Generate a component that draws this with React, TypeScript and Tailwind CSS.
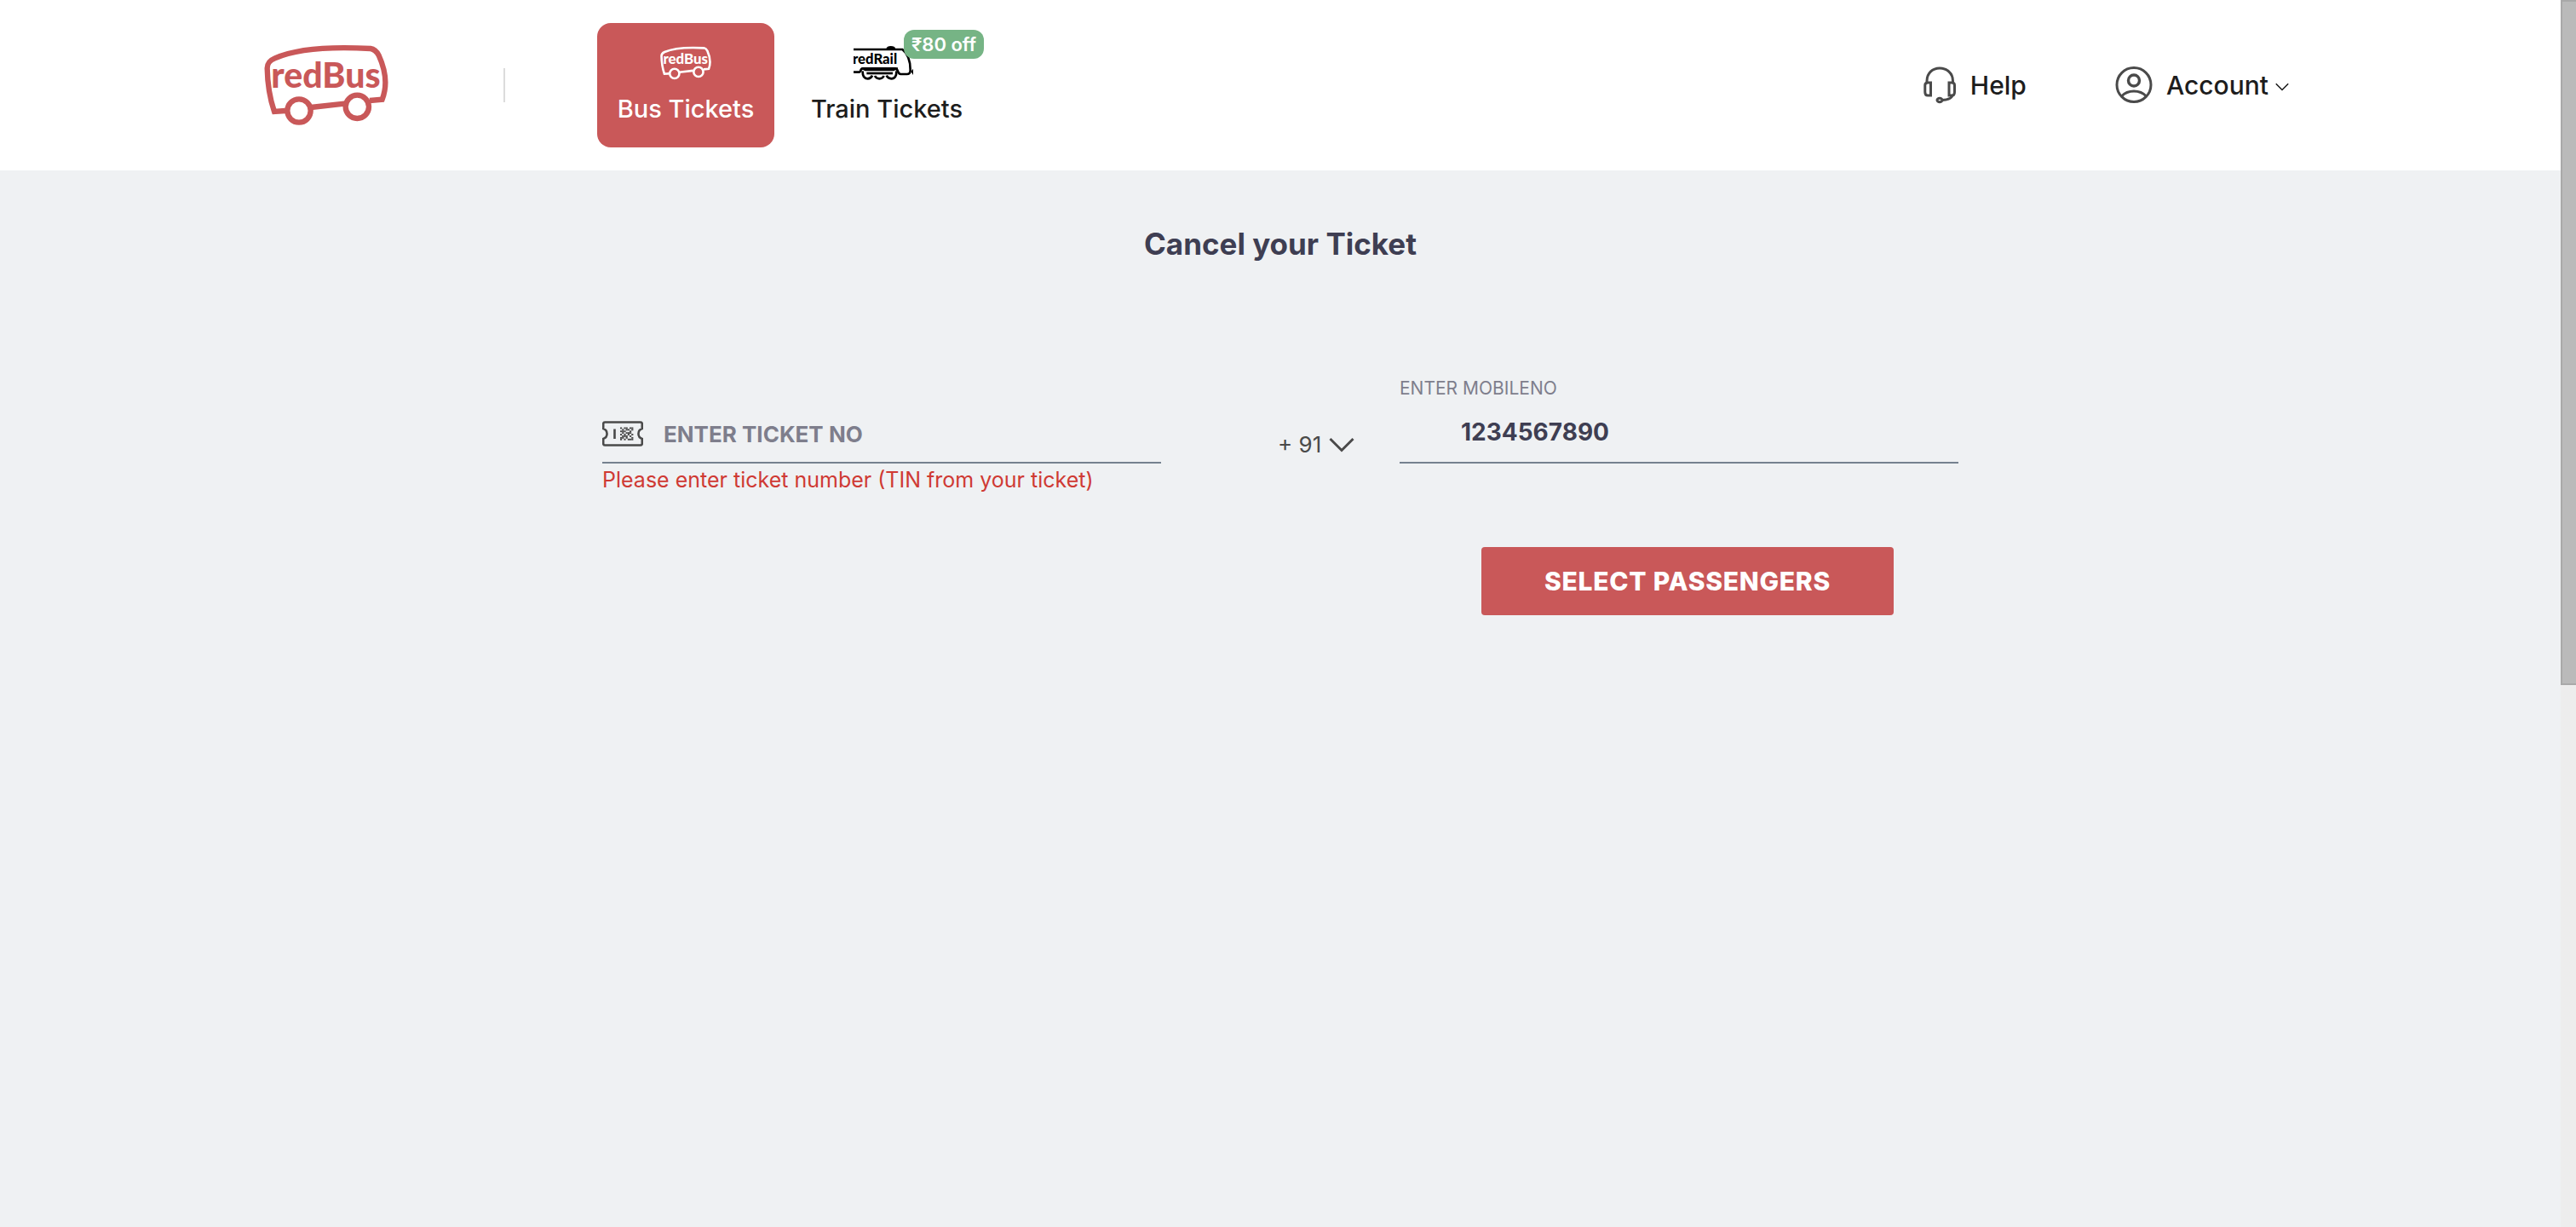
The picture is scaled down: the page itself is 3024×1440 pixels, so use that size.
import { useState } from "react";

function BusLogo({ className }: { className: string }) {
  return (
    <svg viewBox="0 0 438 288" className={className} role="img" aria-label="redBus">
      <g fill="none" stroke="currentColor" strokeWidth="19">
        <path d="M75 234 L36 237 C22 196 12 140 11 84 C11 66 19 57 38 49 C112 16 230 7 375 15 C388 17 396 24 404 39 C430 96 434 148 416 194 L372 198" />
        <path d="M165 222 L283 209" />
        <circle cx="123" cy="234" r="41" />
        <circle cx="328" cy="220" r="41" />
      </g>
      <text x="25" y="152" fontSize="123" fontWeight="900" fill="currentColor" className="font-['Lato',sans-serif]">
        redBus
      </text>
    </svg>
  );
}

function TrainLogo({ className }: { className: string }) {
  return (
    <svg viewBox="0 0 234 120" className={className} role="img" aria-label="redRail">
      <g fill="none" stroke="currentColor" strokeWidth="8">
        <path d="M0 12 H172 C192 28 200 56 200 84 C200 96 196 99 188 99 H166 C158 99 158 94 155 86 Q152 79 144 79 H34 Q27 79 25 86 Q24 92 16 92 H0" />
        <path d="M32 88 Q31 115 50 115 Q61 115 66 104" />
        <path d="M75 105 Q80 115 91 115 Q102 115 107 105" />
        <path d="M116 104 Q122 115 133 115 Q152 115 151 88" />
        <path d="M46 96 H138" />
      </g>
      <path d="M28 76 H156 V84 H148 L142 88 H40 L34 84 H28 Z" fill="currentColor" />
      <path d="M115 10 C117 2 122 0 131 0 C141 0 146 2 148 10 Z" fill="currentColor" />
      <path d="M202 90 L210 80 V102 Z" fill="currentColor" />
      <text x="-3" y="62" fontSize="50" fontWeight="900" fill="currentColor" className="font-['Lato',sans-serif]">
        redRail
      </text>
    </svg>
  );
}

function HeadsetIcon() {
  return (
    <svg viewBox="0 0 40 44" className="h-11 w-10 text-[#4a4a4a]" fill="none" stroke="currentColor" strokeWidth="3" aria-hidden="true">
      <path d="M5 19 V17 C5 8 11.500 2 20 2 C28.500 2 35.500 8 35.500 17 V19" />
      <path d="M9.500 19 H6 Q2.800 19 2.800 22 V30 Q2.800 34 6 34 H9.500 Z" />
      <path d="M31 19 H34.500 Q37.500 19 37.500 22 V30 Q37.500 34 34.500 34 H31 Z" />
      <path d="M35 34 Q33 39 23 39.500" />
      <ellipse cx="20" cy="39.500" rx="3" ry="2.200" />
    </svg>
  );
}

function AccountIcon() {
  return (
    <svg viewBox="0 0 44 44" className="size-11 text-[#4a4a4a]" fill="none" stroke="currentColor" strokeWidth="3" aria-hidden="true">
      <circle cx="22" cy="21.500" r="20" />
      <circle cx="22" cy="16.500" r="6.500" strokeWidth="3.400" />
      <path d="M7.500 35 Q13 29 22 29 Q31 29 36.500 35" />
    </svg>
  );
}

function Chevron({ className }: { className: string }) {
  return (
    <svg viewBox="0 0 30 18" className={className} fill="none" stroke="currentColor" strokeWidth="3" aria-hidden="true">
      <path d="M1.500 2 L15 15.500 L28.500 2" />
    </svg>
  );
}

const qrRows = ["1011011", "0101101", "1110010", "0101110", "1010101", "0111010", "1101001", "1010111"];

function TicketIcon() {
  return (
    <svg viewBox="0 0 48 30" className="h-[30px] w-12 shrink-0 text-[#4a4a4a]" fill="none" stroke="currentColor" strokeWidth="2.600" aria-hidden="true">
      <path d="M3 1.500 H45 Q46.800 1.500 46.800 3.500 V9 C41 11 41 19 46.800 21 V26.500 Q46.800 28.500 45 28.500 H3 Q1.200 28.500 1.200 26.500 V21 C7 19 7 11 1.200 9 V3.500 Q1.200 1.500 3 1.500 Z" />
      <path d="M14.500 9.500 V21" />
      <g fill="currentColor" stroke="none">
        {qrRows.flatMap((row, y) =>
          [...row].map((bit, x) =>
            bit === "1" ? <rect key={`${x}-${y}`} x={21 + x * 2.2} y={7.5 + y * 1.9} width="2.2" height="1.9" /> : null,
          ),
        )}
      </g>
    </svg>
  );
}

function Header() {
  return (
    <header className="flex h-[200px] items-center bg-white pr-[319px] pl-[310px] text-[#1d1d1d]">
      <a href="#home" className="text-[#c95859]">
        <BusLogo className="h-24 w-[146px]" />
      </a>
      <div className="ml-[135px] h-10 w-0.5 bg-[#dcdcdc]" />
      <nav className="ml-[108px] flex items-center text-[29px] leading-9 font-medium">
        <a href="#bus" className="flex h-[146px] w-52 flex-col items-center rounded-2xl bg-[#c95859] pt-[27px] text-white">
          <BusLogo className="h-10 w-[60px]" />
          <span className="mt-4">Bus Tickets</span>
        </a>
        <a href="#train" className="relative ml-7 flex h-[146px] w-52 flex-col items-center pt-[27px]">
          <TrainLogo className="h-10 w-[78px] text-black" />
          <span className="mt-4">Train Tickets</span>
          <span className="absolute top-2 left-[124px] flex h-[34px] w-[94px] items-center justify-center rounded-xl bg-[#76b485] text-[22px] font-semibold whitespace-nowrap text-white">
            ₹80 off
          </span>
        </a>
      </nav>
      <div className="ml-auto flex items-center text-[30px] leading-9 font-medium">
        <a href="#help" className="flex items-center gap-4">
          <HeadsetIcon />
          <span>Help</span>
        </a>
        <button type="button" className="ml-[104px] flex items-center">
          <AccountIcon />
          <span className="ml-4">Account</span>
          <Chevron className="mt-1 ml-2 h-[10px] w-4" />
        </button>
      </div>
    </header>
  );
}

function CancelForm() {
  const [ticket, setTicket] = useState("");
  const [mobile, setMobile] = useState("1234567890");
  return (
    <form className="mx-auto mt-[124px] w-[1592px]" onSubmit={(event) => event.preventDefault()}>
      <div className="flex items-start">
        <div className="w-[656px] pt-11">
          <div className="flex h-[68px] items-center border-b-2 border-[#75818f]">
            <TicketIcon />
            <input
              id="ticket"
              aria-label="Enter ticket no"
              aria-describedby="ticket-error"
              placeholder="ENTER TICKET NO"
              value={ticket}
              onChange={(event) => setTicket(event.target.value)}
              className="ml-6 h-9 min-w-0 flex-1 bg-transparent text-[26px] font-bold text-[#3e3e52] outline-none placeholder:text-[#7e7e8c]"
            />
          </div>
          <p id="ticket-error" className="text-[25px] leading-[38px] text-[#cf3a34]">
            Please enter ticket number (TIN from your ticket)
          </p>
        </div>
        <div className="mt-[72px] ml-auto flex items-center text-[#4a4a4a]">
          <select aria-label="Country code" className="w-[60px] appearance-none bg-transparent text-[26px] leading-9 outline-none">
            <option>+ 91</option>
          </select>
          <Chevron className="h-[18px] w-[30px]" />
        </div>
        <div className="ml-[53px] w-[656px]">
          <label htmlFor="mobile" className="block h-10 pt-2 text-[21px] leading-8 text-[#7e7e8c]">
            ENTER MOBILENO
          </label>
          <input
            id="mobile"
            type="tel"
            value={mobile}
            onChange={(event) => setMobile(event.target.value)}
            className="h-[72px] w-full border-b-2 border-[#75818f] bg-transparent pl-[72px] text-[28px] font-bold text-[#3e3e52] outline-none"
          />
        </div>
      </div>
      <div className="mt-[60px] flex justify-end pr-[76px]">
        <button type="submit" className="h-20 w-[484px] rounded bg-[#c95859] text-[30px] font-extrabold tracking-wide text-white">
          SELECT PASSENGERS
        </button>
      </div>
    </form>
  );
}

export default function App() {
  return (
    <div className="flex min-h-screen bg-[#eff1f3] font-['Inter','Noto_Sans',sans-serif]">
      <div className="min-w-0 flex-1">
        <Header />
        <main>
          <h1 className="mt-16 text-center text-[35px] leading-[44px] font-bold text-[#3e3e52]">Cancel your Ticket</h1>
          <CancelForm />
        </main>
      </div>
      <div className="w-[18px] bg-[#ededed]" aria-hidden="true">
        <div className="h-[804px] border-2 border-r-0 border-[#a9a9a9] bg-[#bababa]" />
      </div>
    </div>
  );
}
